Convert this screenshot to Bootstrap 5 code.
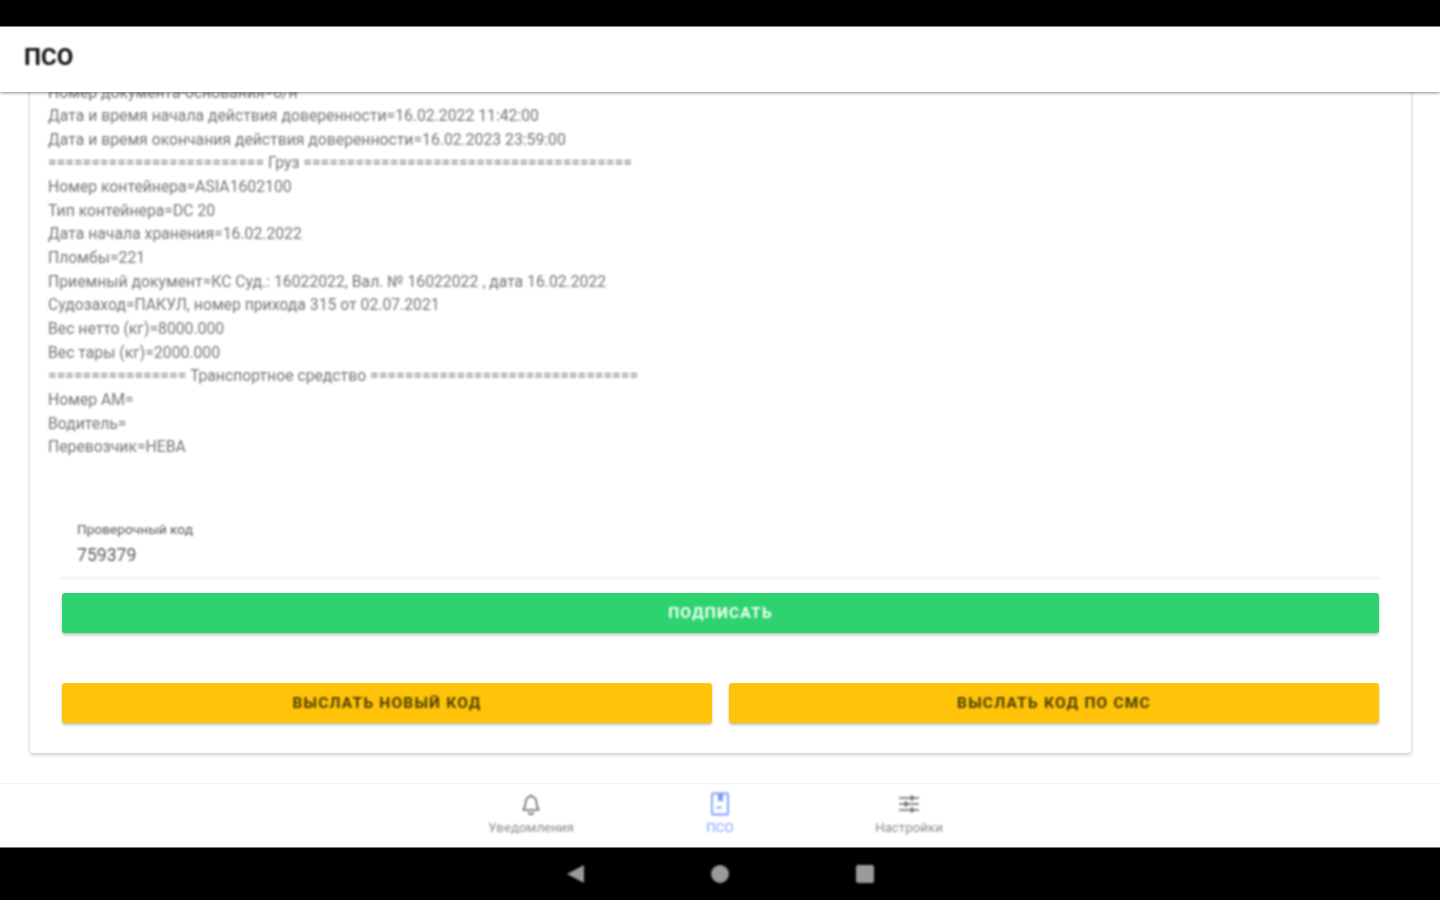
<!DOCTYPE html>
<html lang="ru">
<head>
    <meta charset="UTF-8">
    <meta name="viewport" content="width=device-width, initial-scale=1.0">
    <title>ПСО</title>
    <link href="https://cdn.jsdelivr.net/npm/bootstrap@5.3.0/dist/css/bootstrap.min.css" rel="stylesheet">
    <style>
        html, body { height: 100%; }
        body { font-family: Roboto, "Liberation Sans", sans-serif; overflow: hidden; }
        .status-strip { height: 27px; background: #000; border-bottom: 1px solid #888; flex: none; }
        .app-header { height: 65px; flex: none; z-index: 2; padding: 0 0 6px 24px; font-size: 24px; font-weight: 700; color: #111; box-shadow: 0 1px 3px rgba(0,0,0,.45); }
        .app-header span { filter: blur(.8px); }
        .page-area { min-height: 0; padding: 0 29px 30px 30px; }
        .doc-card { border: 0; border-radius: 4px; box-shadow: 0 2px 4px rgba(0,0,0,.2), 0 0 2px rgba(0,0,0,.1); padding: 0 32px 30px; }
        .doc-lines { margin: 0 0 0 -14px; padding-bottom: 62px; font-size: 15.75px; line-height: 23.65px; color: #737373; filter: blur(.9px); white-space: nowrap; }
        .code-field { margin: 0 -2px 14px -3px; padding: 0 0 11px 18px; border-bottom: 2px solid #eee; color: #555; filter: blur(.85px); }
        .code-label { font-size: 13.7px; line-height: 16px; margin-bottom: 8px; }
        .code-value { font-size: 17.6px; line-height: 21px; }
        .act-btn { height: 40px; border: 0; border-radius: 3px; font-size: 15.5px; font-weight: 700; letter-spacing: 1.2px; padding: 1px 0 0; box-shadow: 0 2px 3px rgba(0,0,0,.25); }
        .act-btn span { filter: blur(.85px); display: inline-block; }
        .act-green { background: #2dd36f; color: #f4fff8; margin-bottom: 50px; }
        .act-amber { background: #ffc409; color: #4b3c05; }
        .act-row { gap: 17px; }
        .tab-bar { height: 64px; flex: none; border-top: 1px solid #f2f2f2; }
        .tab-item { width: 189px; color: #8a8a8a; font-size: 13.3px; line-height: 14px; padding-top: 8px; filter: blur(.85px); }
        .tab-item svg { display: block; margin: 0 auto 5px; }
        .tab-on { color: #7c9cff; }
        .sys-nav { height: 53px; flex: none; background: #000; border-top: 1px solid #777; gap: 121px; }
        .sys-nav svg { filter: blur(.85px); }
    </style>
</head>
<body class="d-flex flex-column bg-white">
    <div class="status-strip"></div>

    <header class="app-header bg-white d-flex align-items-center"><span>ПСО</span></header>

    <main class="page-area flex-grow-1 d-flex flex-column justify-content-end overflow-hidden">
        <div class="card doc-card flex-shrink-0">
            <div class="doc-lines">
                <div>Номер документа-основания=б/н</div>
                <div>Дата и время начала действия доверенности=16.02.2022 11:42:00</div>
                <div>Дата и время окончания действия доверенности=16.02.2023 23:59:00</div>
                <div>========================= Груз ======================================</div>
                <div>Номер контейнера=ASIA1602100</div>
                <div>Тип контейнера=DC 20</div>
                <div>Дата начала хранения=16.02.2022</div>
                <div>Пломбы=221</div>
                <div>Приемный документ=КС Суд.: 16022022, Вал. № 16022022 , дата 16.02.2022</div>
                <div>Судозаход=ПАКУЛ, номер прихода 315 от 02.07.2021</div>
                <div>Вес нетто (кг)=8000.000</div>
                <div>Вес тары (кг)=2000.000</div>
                <div>================ Транспортное средство ===============================</div>
                <div>Номер АМ=</div>
                <div>Водитель=</div>
                <div>Перевозчик=НЕВА</div>
            </div>

            <div class="code-field">
                <div class="code-label">Проверочный код</div>
                <div class="code-value">759379</div>
            </div>

            <button type="button" class="btn act-btn act-green w-100"><span>ПОДПИСАТЬ</span></button>

            <div class="d-flex act-row">
                <button type="button" class="btn act-btn act-amber flex-fill w-50"><span>ВЫСЛАТЬ НОВЫЙ КОД</span></button>
                <button type="button" class="btn act-btn act-amber flex-fill w-50"><span>ВЫСЛАТЬ КОД ПО СМС</span></button>
            </div>
        </div>
    </main>

    <nav class="tab-bar bg-white d-flex justify-content-center">
        <div class="tab-item text-center">
            <svg width="24" height="24" viewBox="0 0 24 24" fill="none" stroke="#666" stroke-width="1.6" stroke-linejoin="round" stroke-linecap="round">
                <path d="M12 3.500a1.500 1.500 0 0 1 1.500 1.500c2.600.7 3.900 2.800 3.900 5.400 0 3.200.7 5 2.100 6.600v1H4.500v-1c1.400-1.600 2.100-3.400 2.100-6.600 0-2.600 1.300-4.700 3.900-5.400A1.500 1.500 0 0 1 12 3.500z"/>
                <path d="M10 20.500a2 2 0 0 0 4 0"/>
            </svg>
            Уведомления
        </div>
        <div class="tab-item tab-on text-center">
            <svg width="24" height="24" viewBox="0 0 24 24" fill="none" stroke="#7c9cff" stroke-width="1.8" stroke-linejoin="round">
                <rect x="4" y="1.500" width="16" height="21" rx="1"/>
                <path d="M10 2v8l2.500-1.800L15 10V2" fill="#7c9cff" stroke="none"/>
                <path d="M8.500 15.500h5"/>
            </svg>
            ПСО
        </div>
        <div class="tab-item text-center">
            <svg width="24" height="24" viewBox="0 0 24 24" fill="none" stroke="#666" stroke-width="1.700">
                <path d="M2 6h20M2 12h20M2 18h20"/>
                <path d="M15 3.500v5M9 9.500v5M15 15.500v5" stroke-width="2.600"/>
            </svg>
            Настройки
        </div>
    </nav>

    <div class="sys-nav d-flex align-items-center justify-content-center">
        <svg width="24" height="24" viewBox="0 0 24 24"><path d="M21 3v18L4 12z" fill="#9a9a9a"/></svg>
        <svg width="24" height="24" viewBox="0 0 24 24"><circle cx="12" cy="12" r="9" fill="#9a9a9a"/></svg>
        <svg width="24" height="24" viewBox="0 0 24 24"><rect x="3" y="3" width="18" height="18" rx="2" fill="#9a9a9a"/></svg>
    </div>

    <script src="https://cdn.jsdelivr.net/npm/bootstrap@5.3.0/dist/js/bootstrap.bundle.min.js"></script>
</body>
</html>
